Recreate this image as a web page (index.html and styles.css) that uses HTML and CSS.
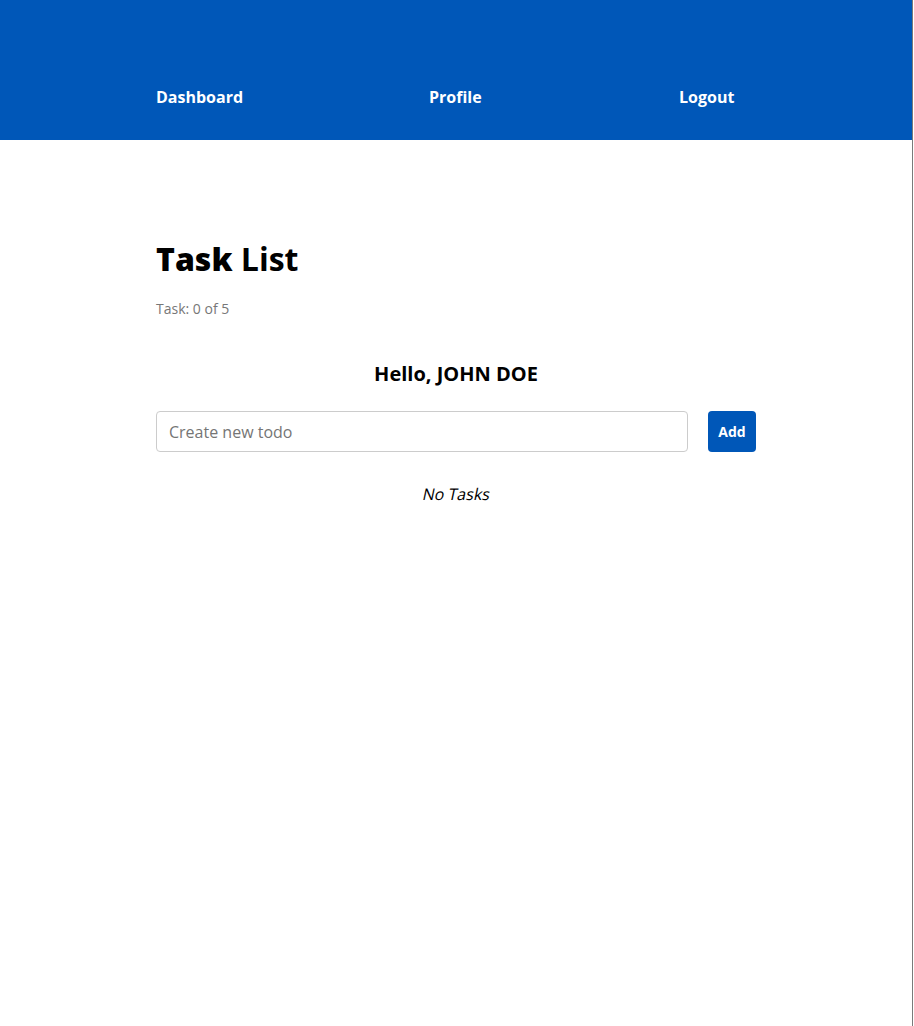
FILE: index.html
```html
<!DOCTYPE html>
<html lang="en">
<head>
<meta charset="utf-8">
<title>Task List</title>
<link rel="stylesheet" href="styles.css">
</head>
<body>
<div class="page">
  <header class="topbar">
    <nav class="nav">
      <a class="nav-link" href="#">Dashboard</a>
      <a class="nav-link" href="#">Profile</a>
      <a class="nav-link" href="#">Logout</a>
    </nav>
  </header>
  <main class="content">
    <h1 class="title"><strong class="title-strong">Task</strong> List</h1>
    <p class="count">Task: 0 of 5</p>
    <h2 class="greeting">Hello, JOHN DOE</h2>
    <form class="todo-form">
      <input class="todo-input" type="text" placeholder="Create new todo">
      <button class="add-btn" type="button">Add</button>
    </form>
    <p class="empty"><span class="empty-text">No Tasks</span></p>
  </main>
</div>
</body>
</html>
```

FILE: styles.css
```css
html, body {
  margin: 0;
  padding: 0;
  background: #ffffff;
}

body {
  font-family: "Open Sans", "Liberation Sans", sans-serif;
  color: #000;
}

.page {
  width: 912px;
  min-height: 100vh;
  border-right: 1px solid #7a7a7a;
  background: #fff;
}

.topbar {
  background: #0057b8;
  height: 140px;
  display: flex;
  align-items: flex-end;
}

.nav {
  width: 600px;
  margin: 0 auto 31px;
  display: grid;
  grid-template-columns: 273px 250px auto;
}

.nav-link {
  color: #fff;
  font-weight: 700;
  font-size: 16px;
  line-height: 24px;
  text-decoration: none;
}

.content {
  width: 600px;
  margin: 0 auto;
  padding-top: 91px;
}

.title {
  margin: 0;
  font-size: 32px;
  line-height: 56px;
  font-weight: 700;
}

.title-strong {
  font-weight: 800;
}

.count {
  margin: 12px 0 0;
  font-size: 14px;
  line-height: 20px;
  color: #777;
}

.greeting {
  margin: 41px 0 0;
  text-align: center;
  font-size: 20px;
  line-height: 28px;
  font-weight: 700;
}

.todo-form {
  margin-top: 23px;
  display: flex;
  gap: 20px;
}

.todo-input {
  flex: 1;
  height: 41px;
  box-sizing: border-box;
  border: 1px solid #ccc;
  border-radius: 4px;
  padding: 0 12px;
  font-family: inherit;
  font-size: 16px;
  color: #333;
  outline: none;
}

.todo-input::placeholder {
  color: #757575;
}

.add-btn {
  width: 48px;
  height: 41px;
  border: none;
  border-radius: 4px;
  background: #0057b8;
  color: #fff;
  font-family: inherit;
  font-weight: 700;
  font-size: 14px;
  padding: 0;
}

.empty {
  margin: 30px 0 0;
  text-align: center;
  font-size: 16px;
  line-height: 24px;
}

.empty-text {
  display: inline-block;
  transform: translateX(1px) skewX(-12deg);
}
```
